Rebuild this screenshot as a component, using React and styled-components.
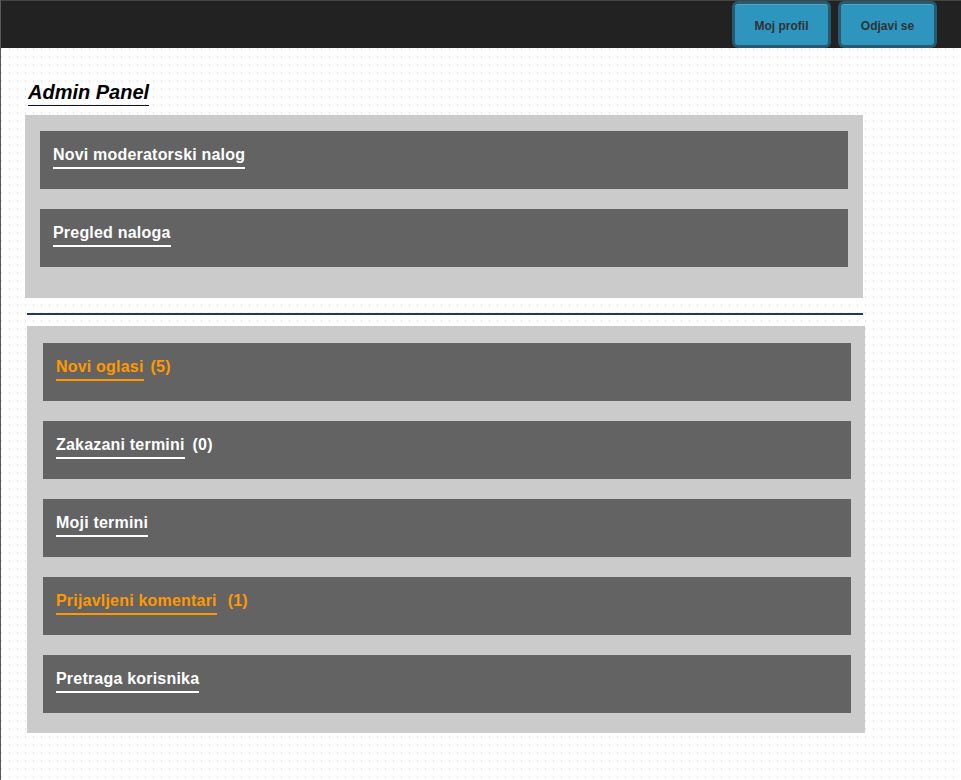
import React from 'react';
import styled, { createGlobalStyle } from 'styled-components';

const GlobalStyle = createGlobalStyle`
  html, body {
    margin: 0;
    padding: 0;
  }
  body {
    font-family: 'Liberation Sans', Arial, sans-serif;
    background-color: #fff;
    background-image: url("data:image/svg+xml,%3Csvg xmlns='http://www.w3.org/2000/svg' width='8' height='8'%3E%3Crect x='1' y='0' width='1' height='2' fill='%23e4e4e4'/%3E%3C/svg%3E");
    background-size: 8px 8px;
  }
`;

const StyledPage = styled.div`
  min-height: 780px;
  box-sizing: border-box;
  border-left: 1px solid #5a5a5a;
`;

const StyledTopBar = styled.header`
  display: flex;
  justify-content: flex-end;
  gap: 7px;
  height: 48px;
  box-sizing: border-box;
  padding-right: 24px;
  background-color: #222;
  border-top: 1px solid #444;
`;

const StyledNavButton = styled.button`
  width: 99px;
  height: 47px;
  padding: 2px 0 0;
  box-sizing: border-box;
  border: 3px solid #275a6f;
  border-radius: 6px;
  background-color: #2e95bf;
  box-shadow: inset 0 1px 0 rgba(255, 255, 255, 0.18);
  color: #2f3336;
  font-family: 'Liberation Sans', Arial, sans-serif;
  font-size: 12px;
  font-weight: bold;
  cursor: pointer;
`;

const StyledMain = styled.main`
  padding: 33px 0 40px 24px;
`;

const StyledHeading = styled.h2`
  display: inline-block;
  margin: 0 0 9px 3px;
  padding-bottom: 1px;
  border-bottom: 1px solid #0b0b4a;
  font-size: 20px;
  font-style: italic;
  font-weight: bold;
  color: #000;
`;

const StyledPanel = styled.section`
  display: flex;
  flex-direction: column;
  gap: 20px;
  width: 838px;
  box-sizing: border-box;
  margin-left: ${({ $shift }) => $shift || 0}px;
  padding: ${({ $pad }) => $pad};
  background-color: #cbcbcb;
`;

const StyledDivider = styled.hr`
  width: 836px;
  height: 2px;
  margin: 15px 0 11px 2px;
  border: 0;
  background-color: #1d3576;
`;

const StyledItem = styled.div`
  height: 58px;
  box-sizing: border-box;
  padding: 15px 13px 0;
  background-color: #636363;
  color: ${({ $alert }) => ($alert ? '#ff9900' : '#fff')};
  font-size: 16px;
  font-weight: bold;
  letter-spacing: 0.2px;
`;

const StyledLink = styled.a`
  display: inline-block;
  padding-bottom: 3px;
  border-bottom: 2px solid currentColor;
  color: inherit;
  text-decoration: none;
`;

const StyledCount = styled.span`
  margin-left: ${({ $gap }) => $gap}px;
`;

const adminLinks = ['Novi moderatorski nalog', 'Pregled naloga'];

const moderatorLinks = [
  { label: 'Novi oglasi', count: 5, gap: 7, alert: true },
  { label: 'Zakazani termini', count: 0, gap: 8 },
  { label: 'Moji termini' },
  { label: 'Prijavljeni komentari', count: 1, gap: 11, alert: true },
  { label: 'Pretraga korisnika' },
];

const App = () => (
  <StyledPage>
    <GlobalStyle />
    <StyledTopBar>
      <StyledNavButton>Moj profil</StyledNavButton>
      <StyledNavButton>Odjavi se</StyledNavButton>
    </StyledTopBar>

    <StyledMain>
      <StyledHeading>Admin Panel</StyledHeading>

      <StyledPanel $pad="16px 15px 31px">
        {adminLinks.map(label => (
          <StyledItem key={label}>
            <StyledLink href="#">{label}</StyledLink>
          </StyledItem>
        ))}
      </StyledPanel>

      <StyledDivider />

      <StyledPanel $shift={2} $pad="17px 14px 20px 16px">
        {moderatorLinks.map(link => (
          <StyledItem key={link.label} $alert={link.alert}>
            <StyledLink href="#">{link.label}</StyledLink>
            {link.count !== undefined && <StyledCount $gap={link.gap}>({link.count})</StyledCount>}
          </StyledItem>
        ))}
      </StyledPanel>
    </StyledMain>
  </StyledPage>
);

export default App;
